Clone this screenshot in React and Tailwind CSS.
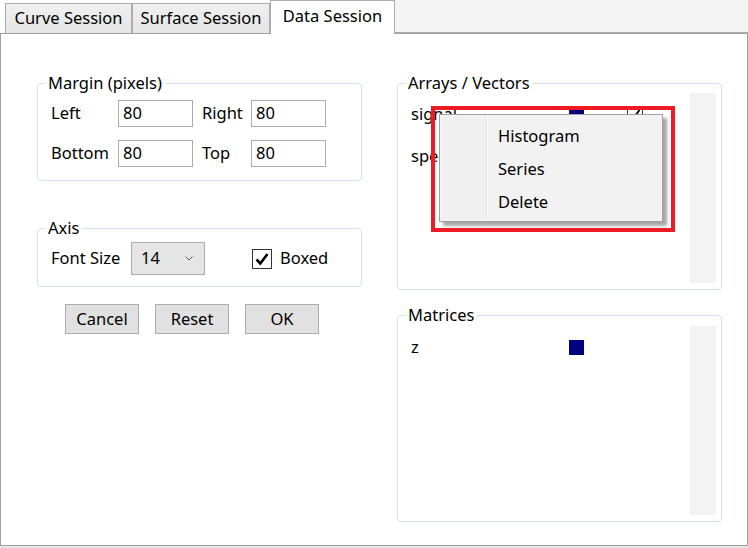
import React from 'react'

const font = { fontFamily: '"Segoe UI", "Noto Sans", sans-serif' }

function Tab({ label, active, w }) {
  if (active) {
    return (
      <div className={`relative z-10 mb-[-1px] flex h-[34px] items-center justify-center border border-b-0 border-[#acacac] bg-white pb-[2px] ${w}`}>
        {label}
      </div>
    )
  }
  return (
    <div className={`flex h-[30px] items-center justify-center border border-b-0 border-[#acacac] bg-gradient-to-b from-[#f0f0f0] to-[#e5e5e5] pb-[1px] ${w}`}>
      {label}
    </div>
  )
}

function Group({ title, className = '', legend = 'ml-[-6px]', children }) {
  return (
    <fieldset className={`rounded-[4px] border border-[#d5dfe5] ${className}`}>
      <legend className={`px-[3px] leading-[22px] ${legend}`}>{title}</legend>
      {children}
    </fieldset>
  )
}

function Field({ value }) {
  return (
    <div className="flex h-[27px] w-[75px] items-center border border-[#abadb3] bg-white pl-[4px]">{value}</div>
  )
}

function Btn({ label }) {
  return (
    <button className="flex h-[30px] w-[74px] items-center justify-center border border-[#adadad] bg-[#e1e1e1]">{label}</button>
  )
}

function Swatch() {
  return <div className="h-[15px] w-[15px] bg-[#000080]" />
}

function Row({ name, check }) {
  return (
    <div className="flex h-[42px] items-center pl-[8px]">
      <div className="w-[158px]">{name}</div>
      <Swatch />
      {check && (
        <div className="ml-[43px] flex h-[16px] w-[16px] items-center justify-center border border-[#333] bg-white">
          <svg width="12" height="12" viewBox="0 0 12 12"><path d="M2 6.5l2.8 3L10.5 2" stroke="#000" strokeWidth="2" fill="none" /></svg>
        </div>
      )}
    </div>
  )
}

export default function App() {
  return (
    <div className="h-[548px] w-[748px] overflow-hidden bg-white text-[16.5px] text-black" style={font}>
      {/* tab strip */}
      <div className="flex h-[33px] items-end pl-[5px]">
        <Tab label="Curve Session" w="w-[127px]" />
        <Tab label="Surface Session" w="w-[138px]" />
        <Tab label="Data Session" w="w-[125px]" active />
        <div className="h-[33px] flex-1 border-b border-[#acacac] bg-[#f3f3f3]" />
      </div>

      {/* panel */}
      <div className="flex h-[513px] gap-[35px] border border-[#a0a0a0] pl-[36px] pt-[38px]">
        {/* left column */}
        <div className="w-[325px]">
          <Group title="Margin (pixels)" className="px-[13px] pb-[13px]">
            <div className="mt-[6px] flex flex-col gap-[13px]">
              <div className="flex items-center">
                <div className="w-[67px]">Left</div>
                <Field value="80" />
                <div className="ml-[9px] w-[49px]">Right</div>
                <Field value="80" />
              </div>
              <div className="flex items-center">
                <div className="w-[67px]">Bottom</div>
                <Field value="80" />
                <div className="ml-[9px] w-[49px]">Top</div>
                <Field value="80" />
              </div>
            </div>
          </Group>

          <Group title="Axis" className="mt-[36px] px-[13px] pb-[11px]">
            <div className="mt-[3px] flex items-center">
              <div className="w-[80px]">Font Size</div>
              <div className="flex h-[33px] w-[74px] items-center justify-between border border-[#acacac] bg-[#e5e5e5] pl-[9px] pr-[11px]">
                <span>14</span>
                <svg width="8" height="5" viewBox="0 0 8 5"><path d="M0.5 0.5L4 4L7.5 0.5" stroke="#606060" strokeWidth="1" fill="none" /></svg>
              </div>
              <div className="ml-[47px] flex h-[20px] w-[20px] items-center justify-center border border-[#333] bg-white">
                <svg width="16" height="16" viewBox="0 0 16 16"><path d="M2.5 8.5l3.8 4L13.5 3" stroke="#000" strokeWidth="2.6" fill="none" /></svg>
              </div>
              <div className="ml-[8px]">Boxed</div>
            </div>
          </Group>

          <div className="mt-[17px] flex gap-[16px] pl-[28px]">
            <Btn label="Cancel" />
            <Btn label="Reset" />
            <Btn label="OK" />
          </div>
        </div>

        {/* right column */}
        <div className="w-[325px]">
          <div className="relative">
            <Group title="Arrays / Vectors" className="px-[5px] pb-[6px]" legend="ml-[2px]">
              <div className="mt-[-1px] flex h-[190px]">
                <div className="flex-1">
                  <Row name="signal" check />
                  <Row name="spectrum" check />
                </div>
                <div className="w-[26px] bg-[#f3f3f3]" />
              </div>
            </Group>

            {/* context menu */}
            <div className="absolute left-[42px] top-[42px] z-10 flex h-[108px] w-[224px] border border-[#a0a0a0] bg-[#f2f2f2] p-[2px] shadow-[4px_4px_3px_rgba(0,0,0,0.35)]">
              <div className="w-[45px] border-r border-[#e2e3e3] bg-[#f0f0f0]" />
              <div className="w-px bg-white" />
              <div className="flex flex-1 flex-col pt-[3px]">
                <div className="flex h-[33px] items-center pl-[10px]">Histogram</div>
                <div className="flex h-[33px] items-center pl-[10px]">Series</div>
                <div className="flex h-[33px] items-center pl-[10px]">Delete</div>
              </div>
            </div>

            {/* annotation */}
            <div className="absolute left-[34px] top-[34px] z-20 h-[126px] w-[244px] border-[4px] border-[#ed1c24]" />
          </div>

          <Group title="Matrices" className="mt-[14px] px-[5px] pb-[6px]" legend="ml-[2px]">
            <div className="flex h-[189px]">
              <div className="flex-1">
                <Row name="z" />
              </div>
              <div className="w-[26px] bg-[#f3f3f3]" />
            </div>
          </Group>
        </div>
      </div>
      <div className="h-[2px] bg-[#e6e6e6]" />
    </div>
  )
}
